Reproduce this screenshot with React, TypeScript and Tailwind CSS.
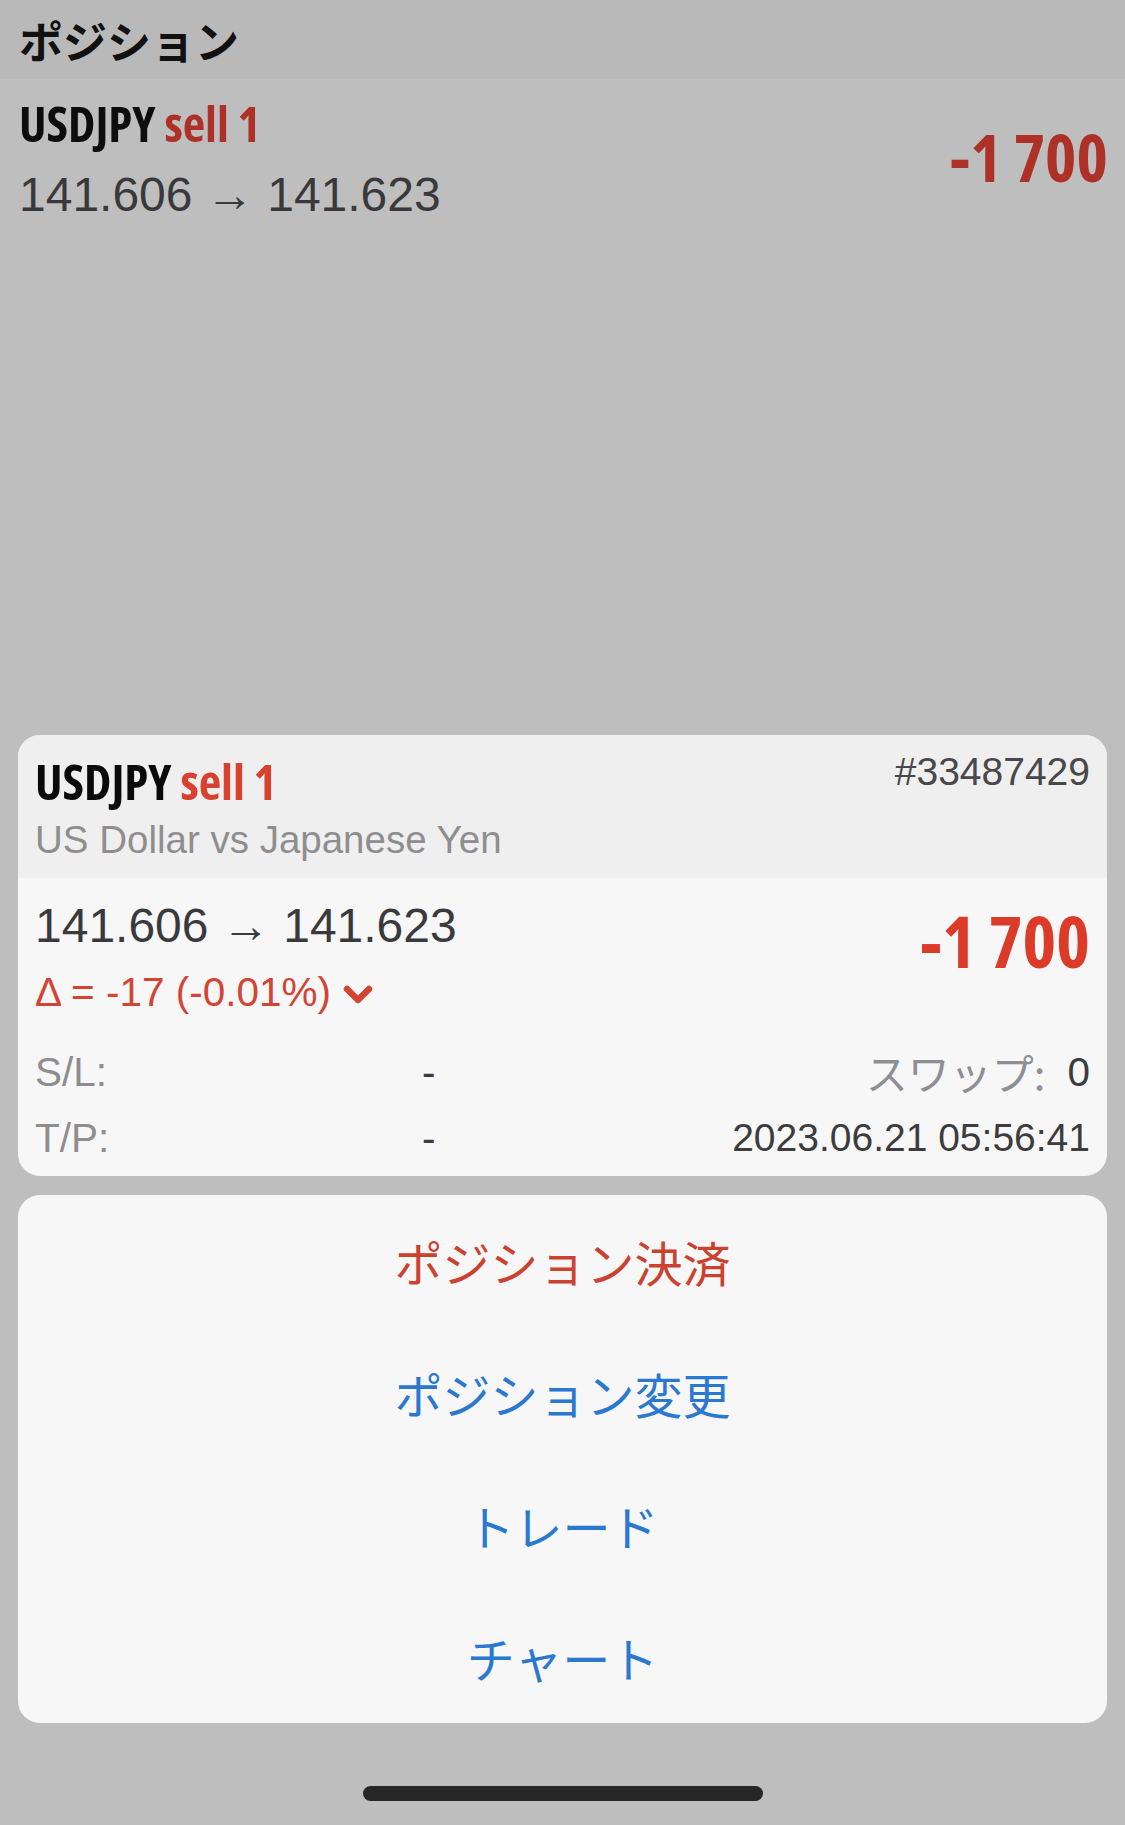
import React from "react";

const sans = "font-['Liberation_Sans','Noto_Sans_CJK_JP',sans-serif]";
const cond = "font-['Open_Sans','Liberation_Sans_Narrow',sans-serif] [font-stretch:75%] font-bold";
const jp = "font-['Noto_Sans_CJK_JP',sans-serif]";

function ChevronDown() {
  return (
    <svg width="30" height="22" viewBox="0 0 30 22" className="ml-[12px] mt-[4px]">
      <polyline points="4,5 15,16 26,5" fill="none" stroke="#d24433" strokeWidth="6.5" strokeLinecap="round" strokeLinejoin="round" />
    </svg>
  );
}

const actions = [
  { label: "ポジション決済", color: "text-[#cc4230]" },
  { label: "ポジション変更", color: "text-[#2a78cf]" },
  { label: "トレード", color: "text-[#2a78cf]" },
  { label: "チャート", color: "text-[#2a78cf]" },
];

export default function App() {
  return (
    <div className="flex h-[1825px] w-[1125px] flex-col overflow-hidden bg-[#bebebe]">
      {/* screen title */}
      <div className="flex h-[79px] items-center bg-[#b9b9b9] px-[19px]">
        <h1 className={`${jp} text-[44px] font-bold leading-none text-[#111]`}>ポジション</h1>
      </div>

      {/* dimmed position row */}
      <div className="flex items-start justify-between pl-[19px] pr-[17px] pt-[19px]">
        <div>
          <div className={`${cond} text-[49px] leading-[50px] text-[#0d0d0d]`}>
            USDJPY <span className="text-[#ae3128]">sell 1</span>
          </div>
          <div className={`${sans} mt-[23px] text-[48px] leading-[48px] text-[#39393b]`}>141.606 → 141.623</div>
        </div>
        <div className={`${cond} mt-[24px] text-[67px] leading-[68px] text-[#ae3128]`}>-1 700</div>
      </div>

      <div className="flex-1" />

      {/* detail card */}
      <div className="mx-[18px] overflow-hidden rounded-[22px] bg-[#f7f7f7]">
        <div className="bg-[#efefef] px-[17px] pb-[20px] pt-[18px]">
          <div className="flex items-start justify-between">
            <div className={`${cond} mt-[3px] text-[49px] leading-[50px] text-[#0a0a0a]`}>
              USDJPY <span className="text-[#d9412f]">sell 1</span>
            </div>
            <div className={`${sans} text-[39px] leading-[38px] text-[#48484a]`}>#33487429</div>
          </div>
          <div className={`${sans} mt-[15px] text-[38.5px] leading-[37px] text-[#8e8e8e]`}>US Dollar vs Japanese Yen</div>
        </div>

        <div className="px-[17px] pb-[5px] pt-[24px]">
          <div className="flex items-start justify-between">
            <div>
              <div className={`${sans} text-[48px] leading-[48px] text-[#3a3a3c]`}>141.606 → 141.623</div>
              <div className={`${sans} mt-[23px] flex items-center text-[40.5px] leading-[39px] text-[#d24433]`}>
                Δ = -17 (-0.01%)
                <ChevronDown />
              </div>
            </div>
            <div className={`${cond} mt-[2px] text-[72px] leading-[72px] text-[#dc3b2a]`}>-1 700</div>
          </div>

          <div className={`${sans} mt-[27px] text-[40.5px]`}>
            <div className="flex h-[66px] items-center leading-[66px]">
              <span className="w-[387px] text-[#8e8e8e]">S/L:</span>
              <span className="text-[#3c3c3e]">-</span>
              <span className="ml-auto flex items-center">
                <span className={`${jp} text-[42px] text-[#8e8e93]`}>スワップ:</span>
                <span className="ml-[22px] text-[#3c3c3e]">0</span>
              </span>
            </div>
            <div className="flex h-[66px] items-center leading-[66px]">
              <span className="w-[387px] text-[#8e8e8e]">T/P:</span>
              <span className="text-[#3c3c3e]">-</span>
              <span className="ml-auto text-[39px] text-[#3c3c3e]">2023.06.21 05:56:41</span>
            </div>
          </div>
        </div>
      </div>

      {/* action sheet */}
      <div className="mx-[18px] mt-[19px] overflow-hidden rounded-[22px] bg-[#f7f7f7]">
        {actions.map((a) => (
          <div key={a.label} className={`${jp} flex h-[132px] items-center justify-center text-[48px] ${a.color}`}>
            {a.label}
          </div>
        ))}
      </div>

      {/* home indicator */}
      <div className="flex justify-center pb-[24px] pt-[63px]">
        <div className="h-[15px] w-[400px] rounded-full bg-[#262626]" />
      </div>
    </div>
  );
}
